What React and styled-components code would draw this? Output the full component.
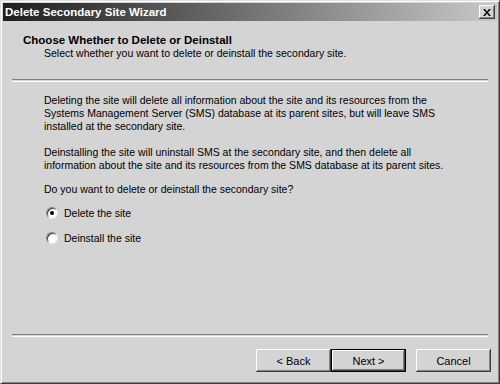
import styled, { createGlobalStyle } from "styled-components"

const Global = createGlobalStyle`
  html, body {
    margin: 0;
    padding: 0;
    background: #d4d4d4;
  }
  body {
    font-family: "Liberation Sans", Arial, sans-serif;
    font-size: 10.5px;
    color: #000;
  }
`

const Window = styled.div`
  box-sizing: border-box;
  width: 500px;
  height: 384px;
  background: #d4d4d4;
  border: 1px solid;
  border-color: #e0e0e0 #404040 #404040 #e0e0e0;
  box-shadow: inset 1px 1px 0 #ffffff, inset -1px -1px 0 #808080;
  padding: 2px;
  display: flex;
  flex-direction: column;
`

const TitleBar = styled.div`
  height: 18px;
  display: flex;
  align-items: center;
  justify-content: space-between;
  padding: 0 2px 0 2px;
  background: linear-gradient(to right, #1e1e1e 0%, #6a6a6a 45%, #c8c8c8 100%);
  color: #fff;
  font-family: "Liberation Sans", Arial, sans-serif;
  font-weight: bold;
  font-size: 11.5px;
`

const CloseButton = styled.button`
  box-sizing: border-box;
  width: 16px;
  height: 14px;
  padding: 0;
  display: flex;
  align-items: center;
  justify-content: center;
  background: #d4d4d4;
  border: none;
  box-shadow: inset -1px -1px 0 #404040, inset 1px 1px 0 #ffffff,
    inset -2px -2px 0 #808080;
`

const Header = styled.div`
  padding: 12px 0 0 20px;
  height: 46px;
`

const HeaderTitle = styled.div`
  font-weight: bold;
  font-size: 11.5px;
  line-height: 14px;
`

const HeaderText = styled.div`
  line-height: 13px;
  padding-left: 21px;
`

const Separator = styled.div`
  margin: 0 9px;
  height: 1px;
  border-top: 1px solid #808080;
  border-bottom: 1px solid #ffffff;
`

const Content = styled.div`
  flex: 1;
  padding: 12px 20px 0 41px;
  display: flex;
  flex-direction: column;
`

const Para = styled.p`
  margin: 0 0 ${(p) => p.$space || 13}px 0;
  line-height: 13px;
`

const RadioRow = styled.label`
  display: flex;
  align-items: center;
  gap: 6px;
  height: 13px;
  margin-bottom: 12px;
`

const RadioCircle = styled.span`
  box-sizing: border-box;
  width: 12px;
  height: 12px;
  border-radius: 50%;
  margin-left: 2px;
  background: #fff;
  border: 1px solid;
  border-color: #808080 #e8e8e8 #e8e8e8 #808080;
  box-shadow: inset 1px 1px 0 #404040;
  display: flex;
  align-items: center;
  justify-content: center;

  &::after {
    content: "";
    width: 4px;
    height: 4px;
    border-radius: 50%;
    background: ${(p) => (p.$checked ? "#000" : "transparent")};
  }
`

const Footer = styled.div`
  display: flex;
  justify-content: flex-end;
  padding: 12px 6px 9px 0;
`

const Button = styled.button`
  box-sizing: border-box;
  width: 75px;
  height: 23px;
  margin-left: ${(p) => p.$gap || 0}px;
  padding: 0;
  background: #d4d4d4;
  font-family: "Liberation Sans", Arial, sans-serif;
  font-size: 11px;
  color: #000;
  border: ${(p) => (p.$default ? "1px solid #000" : "none")};
  box-shadow: inset -1px -1px 0 #404040, inset 1px 1px 0 #ffffff,
    inset -2px -2px 0 #808080;
`

function App() {
  return (
    <>
      <Global />
      <Window>
        <TitleBar>
          <span>Delete Secondary Site Wizard</span>
          <CloseButton aria-label="Close">
            <svg width="8" height="7" viewBox="0 0 8 7">
              <path d="M0 0h2l2 2.5L6 0h2L5 3.5 8 7H6L4 4.5 2 7H0l3-3.5z" fill="#000" />
            </svg>
          </CloseButton>
        </TitleBar>
        <Header>
          <HeaderTitle>Choose Whether to Delete or Deinstall</HeaderTitle>
          <HeaderText>Select whether you want to delete or deinstall the secondary site.</HeaderText>
        </Header>
        <Separator />
        <Content>
          <Para>
            Deleting the site will delete all information about the site and its resources from the
            <br />
            Systems Management Server (SMS) database at its parent sites, but will leave SMS
            <br />
            installed at the secondary site.
          </Para>
          <Para $space={11}>
            Deinstalling the site will uninstall SMS at the secondary site, and then delete all
            <br />
            information about the site and its resources from the SMS database at its parent sites.
          </Para>
          <Para $space={10}>Do you want to delete or deinstall the secondary site?</Para>
          <RadioRow>
            <RadioCircle $checked />
            Delete the site
          </RadioRow>
          <RadioRow>
            <RadioCircle />
            Deinstall the site
          </RadioRow>
        </Content>
        <Separator />
        <Footer>
          <Button>&lt; Back</Button>
          <Button $default>Next &gt;</Button>
          <Button $gap={10}>Cancel</Button>
        </Footer>
      </Window>
    </>
  )
}

export default App
